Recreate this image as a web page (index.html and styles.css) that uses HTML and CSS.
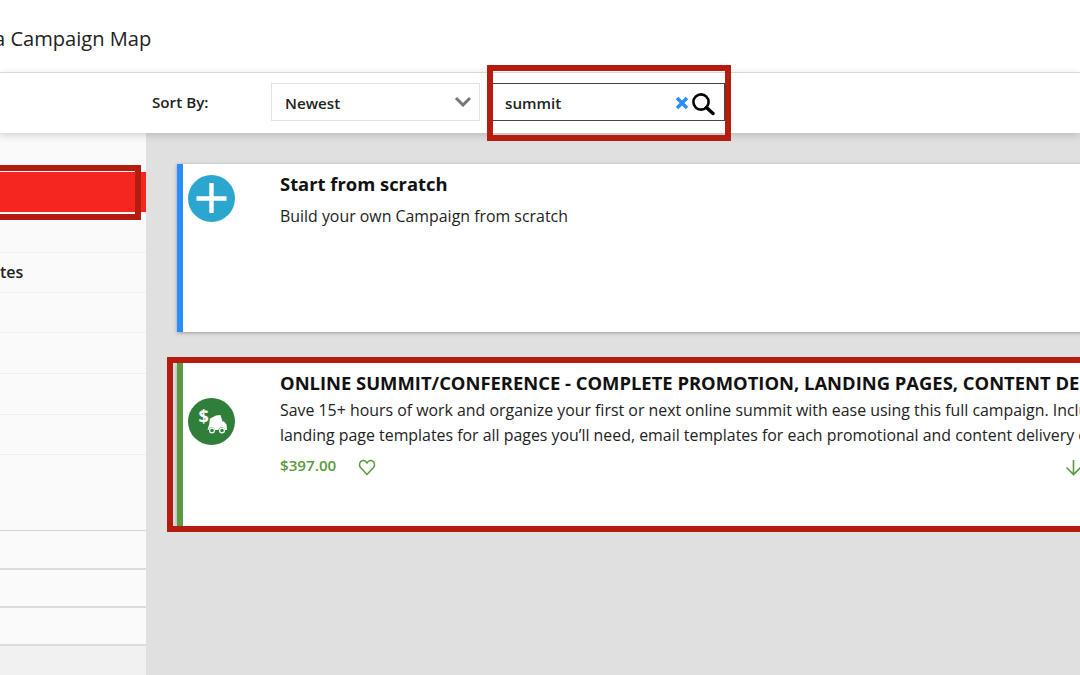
FILE: index.html
```html
<!DOCTYPE html>
<html lang="en">
<head>
<meta charset="utf-8">
<title>Campaign Map</title>
<link rel="stylesheet" href="styles.css">
</head>
<body>
<div class="page">
  <header class="topbar"><h1 class="title">a Campaign Map</h1></header>
  <div class="toolbar">
    <span class="sort-label">Sort By:</span>
    <div class="select">
      <span>Newest</span>
      <svg class="chev" width="18" height="11" viewBox="0 0 18 11"><path d="M2 2l7 7 7-7" fill="none" stroke="#777" stroke-width="3"/></svg>
    </div>
    <div class="search">
      <span class="search-text">summit</span>
      <svg class="clear" width="14" height="14" viewBox="0 0 14 14"><path d="M2 2l10 10M12 2L2 12" stroke="#2a8cff" stroke-width="3.4"/></svg>
      <svg class="magnifier" width="24" height="24" viewBox="0 0 24 24"><circle cx="10" cy="10" r="7.6" fill="none" stroke="#000" stroke-width="2.6"/><path d="M15.5 15.5l6.5 6" stroke="#000" stroke-width="3.4" stroke-linecap="round"/></svg>
    </div>
  </div>
  <div class="content">
    <aside class="sidebar">
      <div class="side-active-row"><div class="side-active"></div></div>
      <div class="side-row"></div>
      <div class="side-row side-text">tes</div>
      <div class="side-row"></div>
      <div class="side-row r41"></div>
      <div class="side-row r41"></div>
      <div class="side-row"></div>
      <div class="side-row tall"></div>
      <div class="side-row r39 dark"></div>
      <div class="side-row r38 dark"></div>
      <div class="side-row r38 dark"></div>
    </aside>
    <main class="main">
      <section class="card card-blue">
        <div class="icon-col">
          <svg width="47" height="47" viewBox="0 0 47 47"><circle cx="23.5" cy="23.5" r="23.5" fill="#2ba6cf"/><path d="M23.5 8v30M8.500 23.500h30" stroke="#fff" stroke-width="4.400"/></svg>
        </div>
        <div class="card-body">
          <h2 class="card-title">Start from scratch</h2>
          <p class="card-text first">Build your own Campaign from scratch</p>
        </div>
      </section>
      <section class="card card-green">
        <div class="icon-col icon-low">
          <svg width="47" height="47" viewBox="0 0 47 47">
            <circle cx="23.5" cy="23.5" r="23.5" fill="#2f7f3b"/>
            <text x="10.500" y="25" class="dollar">$</text>
            <path d="M22 20.500l6-3 4.500-.5 2 6.500h1.500l2.500 3 .5 5.500h-2a3.300 3.300 0 0 0-6.500 0h-3.500a3.300 3.300 0 0 0-6.500 0h-1l1.500-5z" fill="#fff"/>
            <circle cx="24" cy="32.500" r="2.400" fill="#2f7f3b" stroke="#fff" stroke-width="1.200"/>
            <circle cx="34" cy="32.500" r="2.400" fill="#2f7f3b" stroke="#fff" stroke-width="1.200"/>
          </svg>
        </div>
        <div class="card-body">
          <h2 class="card-title">ONLINE SUMMIT/CONFERENCE - COMPLETE PROMOTION, LANDING PAGES, CONTENT DELIVERY</h2>
          <p class="card-text lead">Save 15+ hours of work and organize your first or next online summit with ease using this full campaign. Includes</p>
          <p class="card-text">landing page templates for all pages you’ll need, email templates for each promotional and content delivery email</p>
          <div class="meta">
            <span class="price">$397.00</span>
            <svg class="heart" width="18" height="17" viewBox="0 0 18 17"><path d="M9 15.500L2.500 8.500C.500 6 1.500 2 5 1.500c2-.2 3.200 1 4 2.500.8-1.500 2-2.700 4-2.500 3.500.5 4.500 4.500 2.500 7z" fill="none" stroke="#5b9a3f" stroke-width="1.500"/></svg>
            <svg class="down" width="17" height="17" viewBox="0 0 17 17"><path d="M8.500 1v14.500M1.500 8.500l7 7 7-7" fill="none" stroke="#5b9a3f" stroke-width="1.600"/></svg>
          </div>
        </div>
      </section>
    </main>
  </div>
  <div class="mark mark-side"></div>
  <div class="mark mark-search"></div>
  <div class="mark mark-card"></div>
</div>
</body>
</html>
```

FILE: styles.css
```css
* { box-sizing: border-box; }
html, body { margin: 0; height: 100%; overflow: hidden; }
body { font-family: "Open Sans", "Liberation Sans", sans-serif; color: #111; background: #e0e0e0; }
.page { position: relative; width: 1080px; height: 675px; overflow: hidden; display: flex; flex-direction: column; }

.topbar { height: 73px; background: #fff; border-bottom: 1px solid #e3e3e3; flex: none; }
.title { margin: 0 0 0 -6px; padding-top: 24px; font-size: 20.1px; line-height: 30px; font-weight: 400; color: #222; }

.toolbar { position: relative; z-index: 2; height: 60px; flex: none; background: #fff; display: flex; align-items: center; box-shadow: 0 2px 8px rgba(0,0,0,.18); padding: 0 0 2px 152px; }
.sort-label { width: 119px; font-size: 15.2px; line-height: 20px; font-weight: 600; color: #222; }
.select { width: 209px; height: 38px; background: #fff; border: 1px solid #e2e2e2; display: flex; align-items: center; justify-content: space-between; padding: 2px 7px 0 13px; font-size: 15.2px; font-weight: 600; color: #222; }
.select .chev { margin-top: -3px; }
.search { width: 233px; height: 38px; margin-left: 12px; background: #fff; border-top: 1px solid #444; border-bottom: 1px solid #444; border-right: 1px solid #444; display: flex; align-items: center; padding: 2px 0 0 13px; font-size: 15.2px; font-weight: 600; color: #222; }
.search-text { flex: 1; }
.clear { margin: 0 2px 0 0; }
.magnifier { margin: 2px 9px 0 0; }

.content { flex: 1; display: flex; min-height: 0; }
.sidebar { width: 146px; flex: none; background: #f1f1f1; }
.side-active-row { height: 80px; background: #fafafa; padding-top: 39px; border-bottom: 1px solid #f0f0f0; }
.side-active { height: 40px; background: #f52520; }
.side-row { height: 40px; background: #fafafa; border-bottom: 1px solid #f0f0f0; }
.side-text { font-size: 16px; font-weight: 600; color: #222; line-height: 38px; }
.r41 { height: 41px; }
.tall { height: 76px; border-bottom: 1px solid #d4d4d4; }
.r39 { height: 39px; }
.r38 { height: 38px; }
.dark { border-bottom: 2px solid #dcdcdc; }

.main { flex: 1; min-width: 0; padding: 31px 0 0 31px; display: flex; flex-direction: column; gap: 31px; overflow: hidden; }
.card { width: 1000px; background: #fff; display: flex; box-shadow: 0 1px 4px rgba(0,0,0,.3); white-space: nowrap; }
.card-blue { height: 168px; border-left: 6px solid #2a8cff; }
.card-green { height: 163px; border-left: 6px solid #5b9a3f; }
.icon-col { width: 97px; flex: none; padding: 11px 0 0 5px; }
.icon-low { padding-top: 35px; }
.dollar { font-size: 18px; font-weight: 700; fill: #fff; font-family: "Open Sans", sans-serif; }
.card-title { margin: 0; font-size: 18.4px; line-height: 24px; font-weight: 700; color: #111; padding-top: 8px; }
.card-text { margin: 0; font-size: 15.9px; line-height: 25px; font-weight: 500; color: #222; }
.card-text.first { padding-top: 8px; }
.card-text.lead { padding-top: 3px; }
.card-body { flex: 1; min-width: 0; }
.meta { display: flex; align-items: center; font-size: 15.2px; height: 20px; margin-top: 7px; }
.price { width: 78px; font-weight: 600; color: #5b9a3f; }
.heart { margin-top: 5px; }
.down { margin-left: 689px; margin-top: 4px; }

.mark { position: absolute; z-index: 3; border: 6px solid #b41c10; }
.mark-side { left: -10px; top: 165px; width: 151px; height: 55px; }
.mark-search { left: 487px; top: 65px; width: 244px; height: 76px; }
.mark-card { left: 167px; top: 357px; width: 940px; height: 175px; }
```
